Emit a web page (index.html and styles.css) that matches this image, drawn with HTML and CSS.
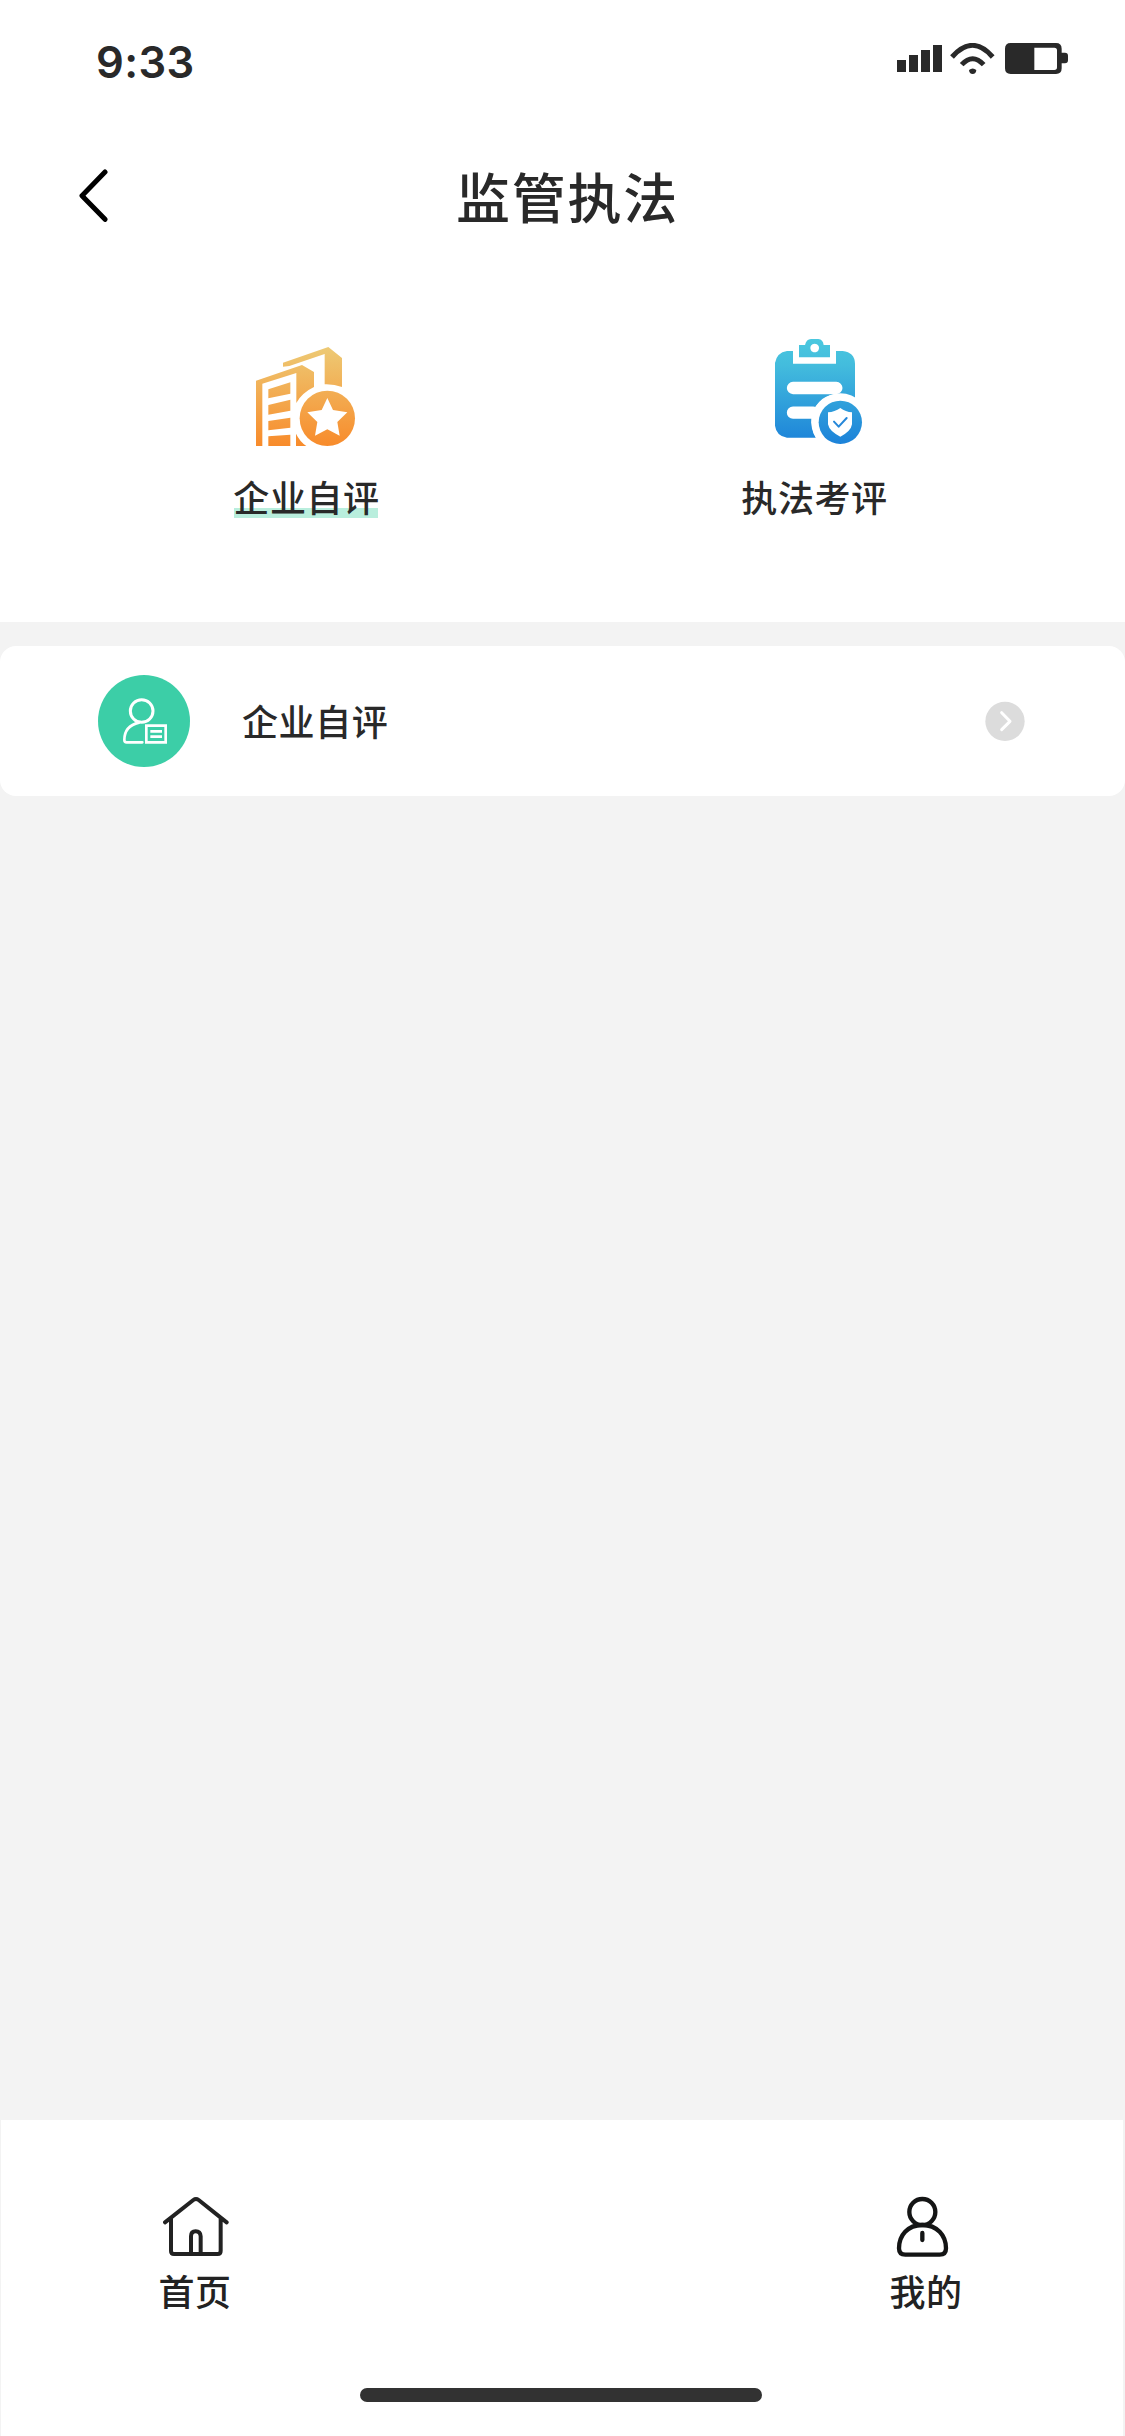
FILE: index.html
```html
<!DOCTYPE html>
<html lang="zh-CN">
<head>
<meta charset="UTF-8">
<title>监管执法</title>
<link rel="stylesheet" href="styles.css">
</head>
<body>
<div class="screen">
  <header class="top">
    <div class="status">
      <span class="time">9:33</span>
      <svg class="status-icons" width="172" height="32" viewBox="0 0 516 96">
        <g fill="#292929">
          <path d="M0 51h27v36H0zM36 36h27v51H36zM72 21h27v66H72zM108 6h27v81h-27z"/>
          <path d="M216 81q11-9 22 0q-1 12-11 12t-11-12z"/>
          <path fill-rule="evenodd" d="M341 0H477q17 0 17 17V29H504q9 0 9 9V52q0 9-9 9H494V76q0 17-17 17H341q-17 0-17-17V17Q324 0 341 0zM412 14V81H472q8 0 8-8V22q0-8-8-8z"/>
        </g>
        <g fill="none" stroke="#292929" stroke-width="15">
          <path d="M165 42Q227-28 287 42"/>
          <path d="M194 65Q227 29 260 65"/>
        </g>
      </svg>
    </div>
    <div class="nav">
      <svg class="back" width="30" height="54" viewBox="0 0 90 162" fill="none" stroke="#000" stroke-width="15" stroke-linecap="round" stroke-linejoin="round"><path d="M78 9L9 80L78 151"/></svg>
      <h1 class="title">监管执法</h1>
    </div>
    <div class="tabs">
      <div class="tab">
        <svg class="tab-icon tab-icon-company" width="102" height="102" viewBox="105 45 306 306">
          <defs><linearGradient id="gold" gradientUnits="userSpaceOnUse" x1="0" y1="50" x2="0" y2="348"><stop offset="0" stop-color="#edca75"/><stop offset="1" stop-color="#f88b2b"/></linearGradient></defs>
          <g fill="url(#gold)">
            <path d="M189 98L325 51L366 84V171Q342 162 314 163V72L208 108L189 110z"/>
            <path d="M108 152L246 105L282 126V171Q246 188 229 219V129L127 161V348H108z"/>
            <path d="M145 178L211 157V191L145 205zM145 225L211 209V242L145 254zM145 273L211 263V293L145 301zM145 319L211 314V348H145z"/>
            <path d="M228 311Q239 334 259 348H228z"/>
            <circle cx="322" cy="265" r="83"/>
          </g>
          <path fill="#fff" d="M322 204L339 240L382 247L352 276L359 317L322 298L285 317L292 276L262 247L305 240z"/>
        </svg>
        <span class="label label-active">企业自评</span>
      </div>
      <div class="tab tab-second">
        <svg class="tab-icon tab-icon-review" width="89" height="107" viewBox="132 24 267 321">
          <defs><linearGradient id="blue" gradientUnits="userSpaceOnUse" x1="0" y1="27" x2="0" y2="342"><stop offset="0" stop-color="#4ac8df"/><stop offset=".25" stop-color="#43bcdd"/><stop offset="1" stop-color="#1c82d9"/></linearGradient></defs>
          <g fill="url(#blue)">
            <path d="M171 63H189V101H318V63H338Q374 67 375 101V207Q323 177 277 207Q230 246 250 306L258 323H171Q139 318 135 287V99Q140 68 171 63z"/>
            <path fill-rule="evenodd" d="M207 45H225Q229 27 243 27H265Q279 28 281 45H300V82H207zM254 41a13 13 0 1 0 .1 0z"/>
          </g>
          <path fill="none" stroke="#fff" stroke-width="37" stroke-linecap="round" d="M189 174H319M189 248H250"/>
          <circle cx="331" cy="277" r="87" fill="#fff"/>
          <circle cx="331" cy="277" r="65" fill="url(#blue)"/>
          <path fill="#fff" d="M331 234Q347 246 366 247V283Q363 304 331 320Q298 304 294 283V247Q314 246 331 234z"/>
          <path fill="none" stroke="#2587d9" stroke-width="6" stroke-linecap="round" stroke-linejoin="round" d="M312 275L326 290L350 264"/>
        </svg>
        <span class="label">执法考评</span>
      </div>
    </div>
  </header>
  <main class="content">
    <div class="card">
      <svg class="avatar" width="92" height="92" viewBox="294 195 276 276">
        <circle cx="432" cy="333" r="138" fill="#3ccea7"/>
        <g fill="none" stroke="#fff" stroke-width="8">
          <circle cx="425" cy="303" r="34" stroke-width="9"/>
          <path stroke-linecap="round" d="M417 338Q373 348 373 390Q373 397 380 397H427"/>
          <path d="M439 347H497V397H439zM451 364H486M451 380H486"/>
        </g>
      </svg>
      <span class="label card-label">企业自评</span>
      <svg class="go" width="40" height="40" viewBox="0 0 120 120"><circle cx="60" cy="61" r="59" fill="#dcdcdc"/><path d="M50 35L75 61L50 86" fill="none" stroke="#fff" stroke-width="9" stroke-linecap="round" stroke-linejoin="round"/></svg>
    </div>
  </main>
  <footer class="bottom">
    <nav class="menu">
      <div class="item">
        <svg class="item-icon home" width="66" height="62" viewBox="491 288 198 186" fill="none" stroke="#222" stroke-width="12" stroke-linecap="round" stroke-linejoin="round">
          <path d="M497 367L582 300Q590 294 598 300L682 367M515 354V453Q515 462 524 462H655Q664 462 664 453V354M575 461V409Q575 394 589 394T604 409V461"/>
        </svg>
        <span class="item-label">首页</span>
      </div>
      <div class="item">
        <svg class="item-icon person" width="54" height="62" viewBox="108 288 162 186" fill="none" stroke="#141515" stroke-width="13" stroke-linecap="round">
          <circle cx="187" cy="336" r="39"/>
          <path d="M187 375C143 375 117 406 117 445Q117 464 136 464H239Q258 464 258 445C258 406 231 375 187 375zM187 399V420"/>
        </svg>
        <span class="item-label">我的</span>
      </div>
    </nav>
    <div class="home-bar"></div>
  </footer>
</div>
</body>
</html>
```
FILE: styles.css
```css
* { box-sizing: border-box; }
body {
  margin: 0;
  background: #f3f3f3;
  color: #292929;
  font-family: "Noto Sans CJK SC", sans-serif;
}
svg { display: block; flex: none; }
.screen {
  display: flex;
  flex-direction: column;
  width: 1125px;
  height: 2436px;
}
.top { height: 622px; background: #fff; }
.status {
  display: flex;
  justify-content: space-between;
  align-items: flex-start;
  height: 124px;
  padding: 43px 56px 0 96px;
}
.time {
  font: 600 43.5px/38px Inter, sans-serif;
  letter-spacing: .4px;
}
.nav {
  display: grid;
  grid-template-columns: 30px 1fr 30px;
  align-items: center;
  height: 144px;
  padding: 0 69px 0 79px;
}
.title {
  margin: 0;
  font-size: 54px;
  line-height: 80px;
  font-weight: 500;
  letter-spacing: 1.7px;
  text-align: center;
}
.tabs {
  display: flex;
  gap: 361px;
  padding: 70px 0 0 233px;
}
.tab {
  display: flex;
  flex-direction: column;
  align-items: center;
  justify-content: space-between;
  width: 147px;
  height: 182px;
  padding-top: 7px;
}
.tab-second { padding-top: 0; }
.tab-icon-company { margin-right: 2px; }
.tab-icon-review { margin-left: 8px; }
.label {
  font-size: 36px;
  line-height: 48px;
  font-weight: 500;
  letter-spacing: .6px;
  white-space: nowrap;
}
.label-active {
  border-radius: 3px;
  background: linear-gradient(#b9eedd, #b9eedd) 1px 36px / 144px 10px no-repeat;
}
.content { flex: 1; padding-top: 24px; }
.card {
  display: flex;
  align-items: center;
  height: 150px;
  padding: 0 100px 0 98px;
  border-radius: 16px;
  background: #fff;
}
.card-label { margin: -2px 0 0 52px; }
.go { margin-left: auto; }
.bottom {
  height: 316px;
  margin: 0 2px 0 1px;
  padding-top: 76px;
  background: #fff;
}
.menu {
  display: flex;
  justify-content: space-between;
  height: 192px;
  padding: 0 161px 0 158px;
}
.item {
  display: flex;
  flex-direction: column;
  align-items: center;
  width: 72px;
}
.home { margin-left: 2px; }
.person { margin-right: 6px; }
.item-label {
  margin-top: 8px;
  color: #222;
  font-size: 36px;
  line-height: 48px;
  font-weight: 500;
  letter-spacing: .6px;
  white-space: nowrap;
}
.home-bar {
  width: 402px;
  height: 14px;
  margin-left: 359px;
  border-radius: 7px;
  background: #323232;
}
```
